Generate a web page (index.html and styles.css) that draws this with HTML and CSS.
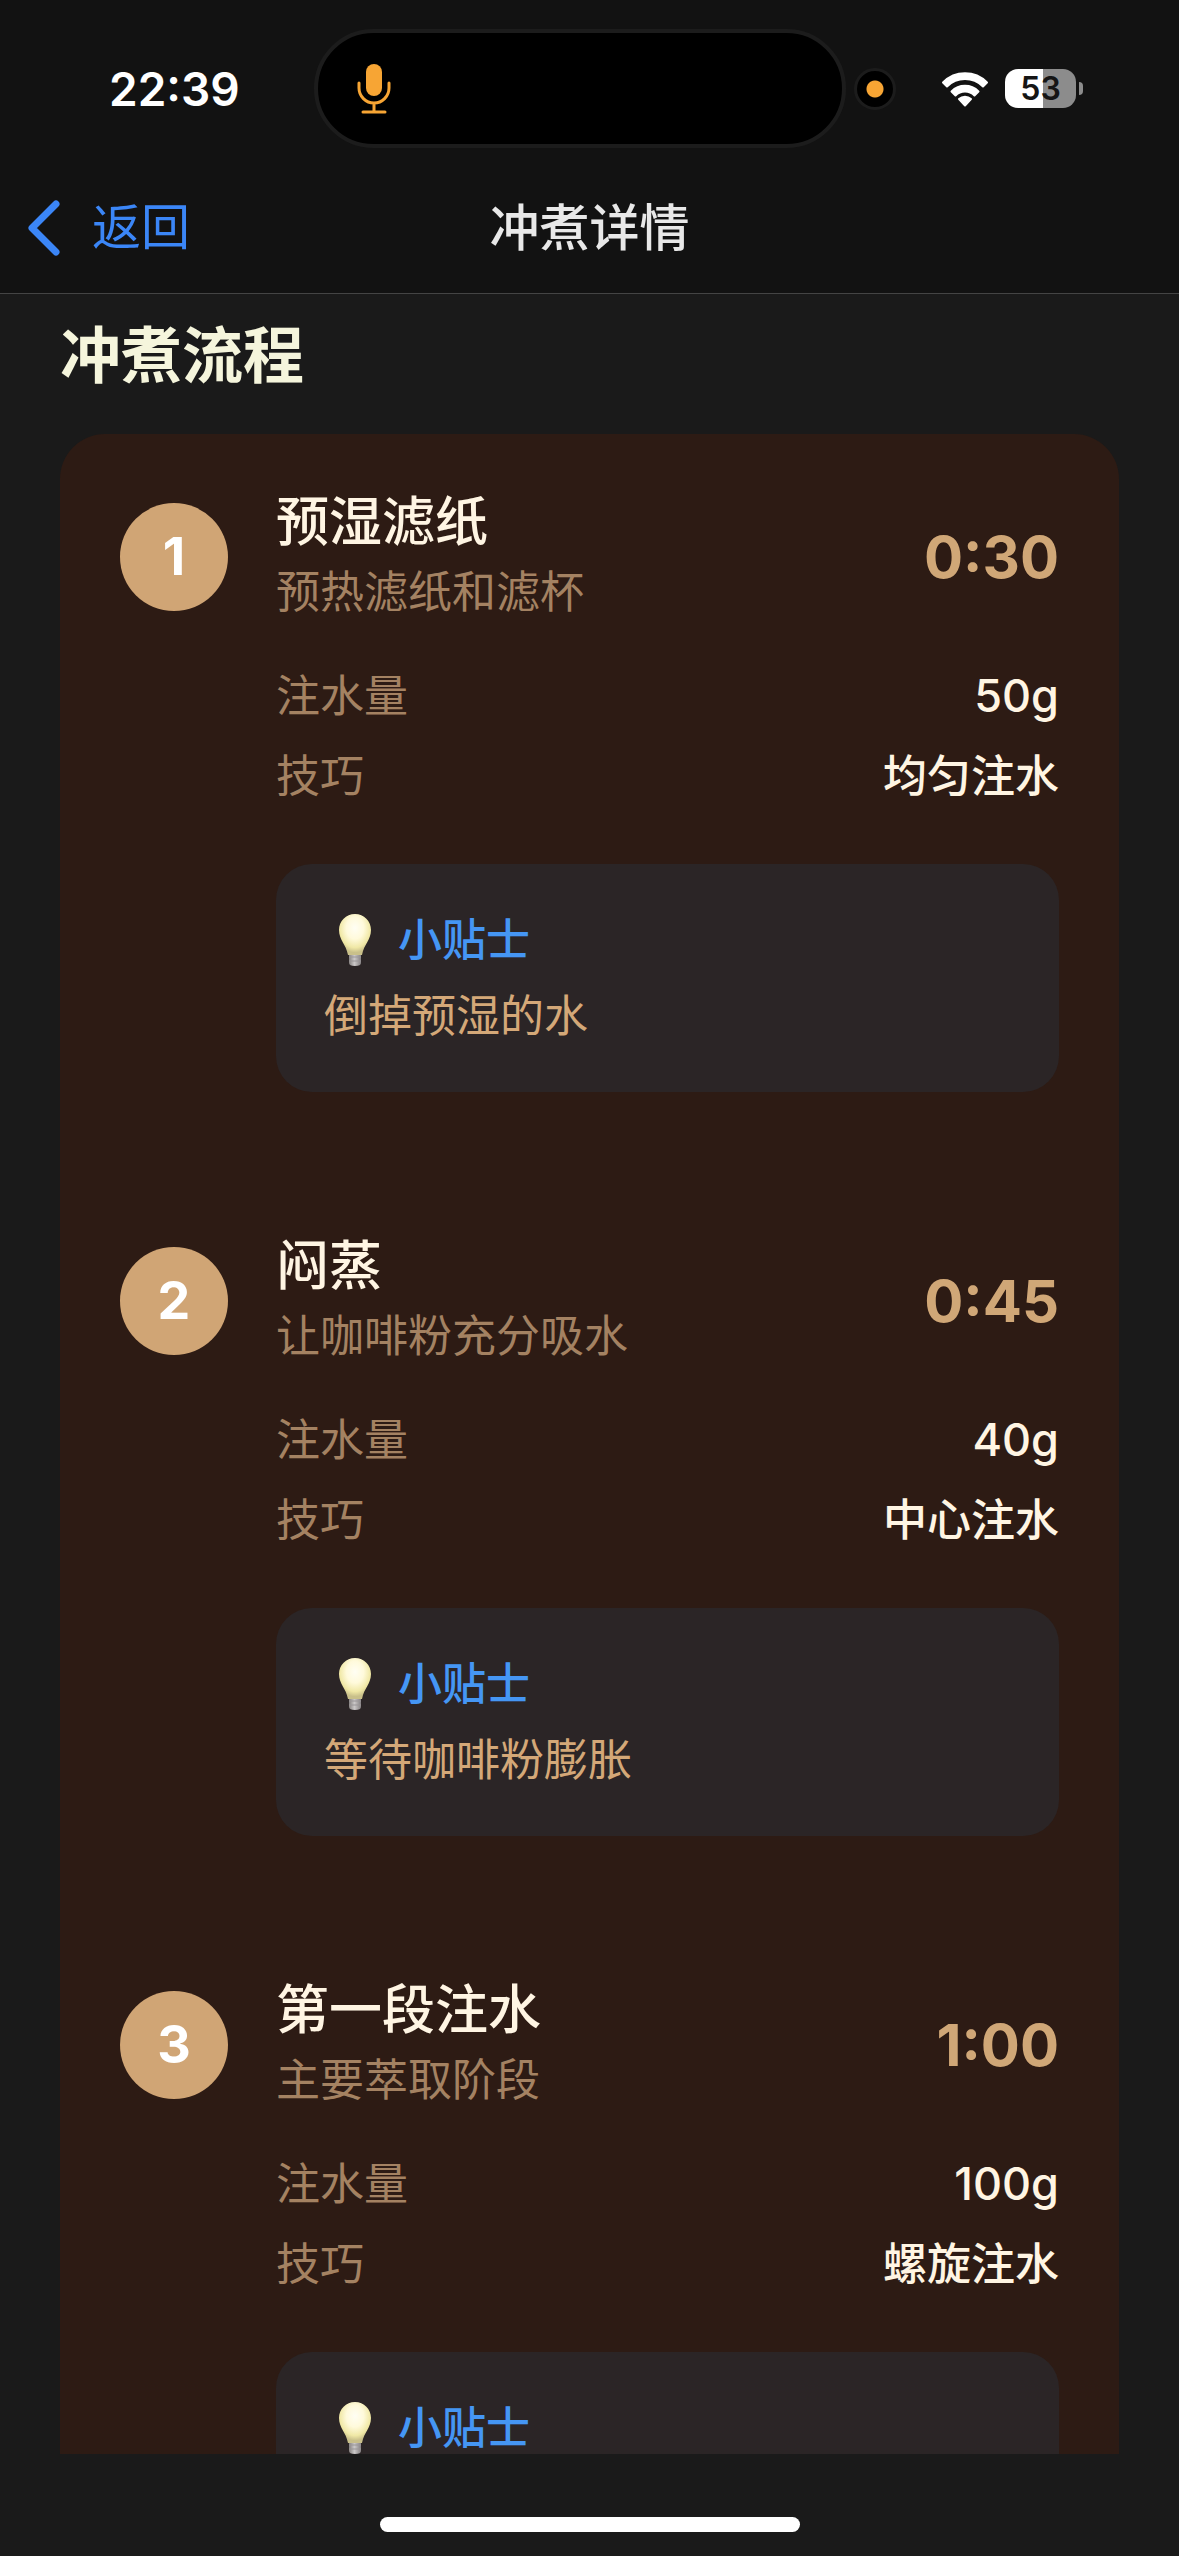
FILE: index.html
```html
<!DOCTYPE html>
<html lang="zh-CN">
<head>
<meta charset="utf-8">
<meta name="viewport" content="width=device-width, initial-scale=1">
<title>冲煮详情</title>
<link rel="stylesheet" href="styles.css">
</head>
<body>
<svg class="defs" width="0" height="0" aria-hidden="true">
  <defs>
    <radialGradient id="glass" cx="50%" cy="34%" r="60%">
      <stop offset="0" stop-color="#fffef4"/>
      <stop offset="0.45" stop-color="#fffadb"/>
      <stop offset="0.8" stop-color="#f0e8a6"/>
      <stop offset="1" stop-color="#c9c08a"/>
    </radialGradient>
    <linearGradient id="base" x1="0" x2="1" y1="0" y2="0">
      <stop offset="0" stop-color="#85817f"/>
      <stop offset="0.45" stop-color="#cbc8c8"/>
      <stop offset="1" stop-color="#858182"/>
    </linearGradient>
    <symbol id="bulb" viewBox="0 0 32 52">
      <path d="M10 38h12v11q0 3-6 3t-6-3z" fill="url(#base)"/>
      <path d="M10 43h12M10 47h12" stroke="#9a9698" stroke-width="1"/>
      <path d="M16 0C7 0 0 7 0 16c0 10 7 14 9 25h14c2-11 9-15 9-25C32 7 25 0 16 0z" fill="url(#glass)"/>
    </symbol>
  </defs>
</svg>
<div class="app">
  <header class="top">
    <div class="status">
      <time class="clock">22:39</time>
      <div class="island">
        <svg class="mic" viewBox="0 0 34 50" aria-hidden="true">
          <rect x="9" y="0" width="16" height="32" rx="8" fill="#f7a534"/>
          <path d="M2 19v5a15 15 0 0 0 30 0v-5M17 39v9M6 48h22" fill="none" stroke="#f7a534" stroke-width="3" stroke-linecap="round"/>
        </svg>
      </div>
      <div class="indicators">
        <span class="privacy"></span>
        <svg class="wifi" viewBox="0 0 48 36" aria-hidden="true">
          <g fill="#fff" stroke="#fff" stroke-width="2" stroke-linejoin="round">
            <path d="M24 34.500l-6-6.500a9 9 0 0 1 12 0z"/>
            <path d="M10.500 20.500a19 19 0 0 1 27 0l-4 4a13.500 13.500 0 0 0-19 0z"/>
            <path d="M2 11.500a31 31 0 0 1 44 0l-4 4a25.500 25.500 0 0 0-36 0z"/>
          </g>
        </svg>
        <div class="battery"><span class="level">53</span><span class="tip-end"></span></div>
      </div>
    </div>
    <nav class="nav">
      <button class="back" type="button">
        <svg class="chevron" viewBox="0 0 34 58" aria-hidden="true"><path d="M29 5L5 29l24 24" fill="none" stroke="#3b86f7" stroke-width="7" stroke-linecap="round" stroke-linejoin="round"/></svg>
        返回
      </button>
      <h1 class="title">冲煮详情</h1>
    </nav>
  </header>
  <main class="content">
    <h2 class="section">冲煮流程</h2>
    <ol class="card">
      <li class="step">
        <div class="num">1</div>
        <div class="head">
          <div class="names"><h3 class="name">预湿滤纸</h3><p class="desc">预热滤纸和滤杯</p></div>
          <span class="duration">0:30</span>
        </div>
        <dl class="facts">
          <div class="fact"><dt>注水量</dt><dd class="amount">50g</dd></div>
          <div class="fact"><dt>技巧</dt><dd>均匀注水</dd></div>
        </dl>
        <aside class="hint">
          <h4 class="hint-title"><svg class="bulb" aria-hidden="true"><use href="#bulb"/></svg>小贴士</h4>
          <p class="hint-text">倒掉预湿的水</p>
        </aside>
      </li>
      <li class="step">
        <div class="num">2</div>
        <div class="head">
          <div class="names"><h3 class="name">闷蒸</h3><p class="desc">让咖啡粉充分吸水</p></div>
          <span class="duration">0:45</span>
        </div>
        <dl class="facts">
          <div class="fact"><dt>注水量</dt><dd class="amount">40g</dd></div>
          <div class="fact"><dt>技巧</dt><dd>中心注水</dd></div>
        </dl>
        <aside class="hint">
          <h4 class="hint-title"><svg class="bulb" aria-hidden="true"><use href="#bulb"/></svg>小贴士</h4>
          <p class="hint-text">等待咖啡粉膨胀</p>
        </aside>
      </li>
      <li class="step">
        <div class="num">3</div>
        <div class="head">
          <div class="names"><h3 class="name">第一段注水</h3><p class="desc">主要萃取阶段</p></div>
          <span class="duration">1:00</span>
        </div>
        <dl class="facts">
          <div class="fact"><dt>注水量</dt><dd class="amount">100g</dd></div>
          <div class="fact"><dt>技巧</dt><dd>螺旋注水</dd></div>
        </dl>
        <aside class="hint">
          <h4 class="hint-title"><svg class="bulb" aria-hidden="true"><use href="#bulb"/></svg>小贴士</h4>
        </aside>
      </li>
    </ol>
  </main>
  <footer class="home"><span class="home-bar"></span></footer>
</div>
</body>
</html>
```
FILE: styles.css
```css
* { box-sizing: border-box; margin: 0; padding: 0; }

body {
  background: #1a1a1a;
  color: #fff5e3;
  font-family: Inter, "Noto Sans CJK SC", sans-serif;
  font-size: 44px;
  line-height: 56px;
}

.defs { display: block; }

.app { display: flex; flex-direction: column; height: 100vh; }

/* status bar and navigation */
.top { background: #121212; border-bottom: 1px solid #444; }

.status {
  display: grid;
  grid-template-columns: 314fr 532fr 333fr;
  align-items: center;
  height: 177px;
}
.clock { padding-left: 109px; font-size: 46px; font-weight: 600; color: #fff; }
.island {
  display: flex;
  align-items: center;
  height: 119px;
  padding-left: 39px;
  border: 4px solid #1c1c1c;
  border-radius: 60px;
  background: #000;
}
.mic { width: 34px; height: 50px; }
.indicators { display: flex; align-items: center; padding: 0 96px 0 8px; }
.privacy {
  width: 42px;
  height: 42px;
  margin-right: auto;
  border: 3px solid #1c1c1c;
  border-radius: 50%;
  background: radial-gradient(circle, #f7a534 8px, #000 9px);
}
.wifi { width: 48px; height: 36px; margin-right: 16px; }
.battery { display: flex; align-items: center; gap: 3px; }
.level {
  width: 71px;
  border-radius: 13px;
  background: linear-gradient(90deg, #fff 53%, #8c8c8c 53%);
  color: #151515;
  font-size: 32px;
  font-weight: 600;
  line-height: 39px;
  text-align: center;
}
.tip-end { width: 4px; height: 13px; border-radius: 0 6px 6px 0; background: #8c8c8c; }

.nav {
  display: grid;
  grid-template-columns: 1fr auto 1fr;
  align-items: center;
  height: 116px;
  padding: 0 27px 14px;
}
.back {
  display: flex;
  align-items: center;
  gap: 31px;
  justify-self: start;
  border: 0;
  background: none;
  color: #3b86f7;
  font: inherit;
  font-size: 49px;
}
.chevron { width: 34px; height: 58px; }
.title { font-size: 50px; font-weight: 500; color: #e8e8e8; }

/* scrolling content */
.content {
  flex: 1;
  min-height: 0;
  padding: 26px 60px 0;
  overflow-y: auto;
  scrollbar-width: none;
}
.section { margin-bottom: 42px; font-size: 61px; font-weight: 700; line-height: 72px; color: #f5f5dc; }

.card {
  display: flex;
  flex-direction: column;
  gap: 26px;
  border-radius: 45px;
  background: #2d1b14;
  list-style: none;
}
.step {
  display: grid;
  grid-template-columns: 108px 1fr;
  column-gap: 48px;
  padding: 60px;
}
.num {
  align-self: center;
  height: 108px;
  border-radius: 50%;
  background: #d0a575;
  color: #fff;
  font-size: 52px;
  font-weight: 700;
  line-height: 108px;
  text-align: center;
}
.head { display: flex; align-items: center; justify-content: space-between; height: 126px; }
.names { display: grid; gap: 14px; }
.name { font-size: 53px; font-weight: 500; }
.desc { color: #a48262; }
.duration { color: #d0a777; font-size: 58px; font-weight: 700; }

.facts { grid-column: 2; display: grid; gap: 24px; margin-top: 48px; }
.fact { display: flex; justify-content: space-between; }
.fact dt { color: #a48262; }
.fact dd { font-weight: 500; }
.fact .amount { font-size: 45px; }

.hint {
  grid-column: 2;
  display: grid;
  gap: 20px;
  margin-top: 60px;
  padding: 48px;
  border-radius: 36px;
  background: #2b2526;
}
.hint-title { display: flex; align-items: center; gap: 12px; color: #4596f4; font-size: 44px; font-weight: 500; }
.bulb { width: 62px; height: 52px; }
.hint-text { color: #d4a878; }

.home { display: flex; justify-content: center; height: 102px; padding-top: 63px; }
.home-bar { width: 420px; height: 15px; border-radius: 8px; background: #fff; }
```
